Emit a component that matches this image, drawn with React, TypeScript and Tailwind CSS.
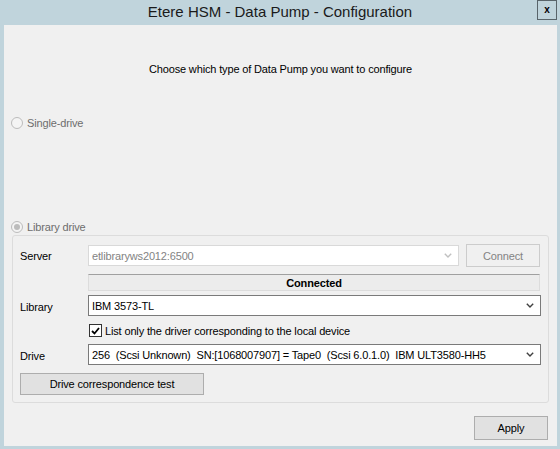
import React from "react";

const font = { fontFamily: '"Liberation Sans", Arial, sans-serif' };

function Chevron({ color }: { color: string }) {
  return (
    <svg width="8" height="5" viewBox="0 0 8 5" className="shrink-0">
      <path d="M0.8 0.8 L4 4 L7.2 0.8" fill="none" stroke={color} strokeWidth="1.4" />
    </svg>
  );
}

function Combo({ text, disabled, width }: { text: string; disabled?: boolean; width: string }) {
  return (
    <div
      className={`${width} h-[21px] flex items-center justify-between bg-white border pl-[3px] pr-[6px] ${
        disabled ? "border-[#d9d9d9] text-[#838383]" : "border-[#7a7a7a] text-black"
      }`}
    >
      <span className="whitespace-pre">{text}</span>
      <Chevron color={disabled ? "#c0c0c0" : "#404040"} />
    </div>
  );
}

export default function App() {
  return (
    <div
      className="w-[560px] h-[449px] bg-[#c0d4dc] flex flex-col text-[11px] tracking-[-0.15px] leading-[14px]"
      style={font}
    >
      <div className="relative h-[25px] shrink-0 flex items-center justify-center tracking-normal">
        <span className="text-[15px] text-[#1a1a1a] leading-[18px] -mt-[1px]">Etere HSM - Data Pump - Configuration</span>
        <div className="absolute right-[3px] top-0 w-[20px] h-[20px] border border-[#59646a] flex items-center justify-center">
          <span className="text-[10px] font-bold leading-none text-black -mt-[1px]">x</span>
        </div>
      </div>
      <div className="flex-1 ml-[4px] mr-[3px] mb-[3px] bg-[#f0f0f0] flex flex-col">
        <div className="mt-[37px] text-center text-black">Choose which type of Data Pump you want to configure</div>

        <div className="mt-[40px] ml-[7px] flex items-center gap-[4px] text-[#6d6d6d]">
          <div className="w-[12px] h-[12px] rounded-full border border-[#bcbcbc] bg-[#f4f4f4]" />
          <span>Single-drive</span>
        </div>

        <div className="mt-[90px] ml-[7px] flex items-center gap-[4px] text-[#6d6d6d]">
          <div className="w-[12px] h-[12px] rounded-full border border-[#bcbcbc] bg-[#f4f4f4] flex items-center justify-center">
            <div className="w-[6px] h-[6px] rounded-full bg-[#bcbcbc]" />
          </div>
          <span>Library drive</span>
        </div>

        <div className="mt-[1px] ml-[8px] w-[537px] h-[168px] border border-[#dcdcdc] rounded-[3px] flex flex-col pl-[7px] text-black">
          <div className="mt-[8px] flex items-center h-[23px]">
            <span className="w-[68px]">Server</span>
            <Combo text="etlibraryws2012:6500" disabled width="w-[371px]" />
            <div className="ml-[7px] w-[74px] h-[23px] border border-[#cccccc] bg-[#f0f0f0] text-[#838383] flex items-center justify-center">
              Connect
            </div>
          </div>
          <div className="mt-[7px] ml-[68px] w-[452px] h-[17px] bg-[#ececec] border border-[#dcdcdc] border-t-[#a0a0a0] flex items-center justify-center font-bold">
            Connected
          </div>
          <div className="mt-[4px] flex items-center">
            <span className="w-[68px] pt-[3px]">Library</span>
            <Combo text="IBM 3573-TL" width="w-[453px]" />
          </div>
          <div className="mt-[8px] ml-[69px] flex items-center gap-[3px] h-[13px]">
            <div className="w-[13px] h-[13px] border border-[#333333] bg-white flex items-center justify-center">
              <svg width="9" height="8" viewBox="0 0 9 8">
                <path d="M1 4 L3.5 6.5 L8 1" fill="none" stroke="#000" strokeWidth="1.8" />
              </svg>
            </div>
            <span>List only the driver corresponding to the local device</span>
          </div>
          <div className="mt-[7px] flex items-center">
            <span className="w-[68px] pt-[3px]">Drive</span>
            <Combo
              text="256  (Scsi Unknown)  SN:[1068007907] = Tape0  (Scsi 6.0.1.0)  IBM ULT3580-HH5"
              width="w-[453px]"
            />
          </div>
          <div className="mt-[8px] w-[184px] h-[22px] border border-[#adadad] bg-[#e1e1e1] flex items-center justify-center">
            Drive correspondence test
          </div>
        </div>

        <div className="mt-[13px] self-end mr-[9px] w-[74px] h-[24px] border border-[#adadad] bg-[#e1e1e1] flex items-center justify-center text-black">
          Apply
        </div>
      </div>
    </div>
  );
}
